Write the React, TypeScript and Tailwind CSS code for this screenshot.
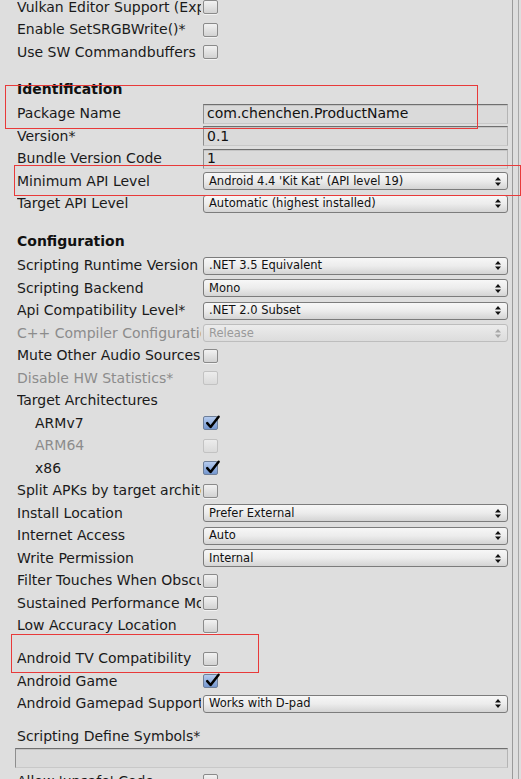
import React from "react";

type RowProps = {
  label: string;
  disabled?: boolean;
  indent?: boolean;
  children?: React.ReactNode;
};

const Row: React.FC<RowProps> = ({ label, disabled, indent, children }) => (
  <div className="flex h-[22.5px] items-center">
    <div
      className={`w-[184px] shrink-0 overflow-hidden whitespace-nowrap ${
        indent ? "pl-[18px]" : ""
      } ${disabled ? "text-[#8c8c8c]" : "text-[#1a1a1a]"}`}
    >
      {label}
    </div>
    <div className="ml-[2px] flex min-w-0 flex-1 items-center">{children}</div>
  </div>
);

const Checkbox: React.FC<{ checked?: boolean; disabled?: boolean }> = ({
  checked,
  disabled,
}) => {
  if (disabled) {
    return (
      <div className="h-[14px] w-[15px] rounded-[2px] border border-[#c2c2c2] bg-gradient-to-b from-[#ececec] to-[#dadada]" />
    );
  }
  if (checked) {
    return (
      <div className="relative h-[14px] w-[15px] rounded-[2px] border border-[#6e7f99] bg-gradient-to-b from-[#b5cbee] to-[#7597cf]">
        <svg
          className="absolute -top-[3px] left-[1px] overflow-visible"
          width="16"
          height="16"
          viewBox="0 0 16 16"
        >
          <path
            d="M2.2 9.2 L5.6 13 L13.6 2.8"
            fill="none"
            stroke="#000"
            strokeWidth="2.5"
            strokeLinecap="round"
            strokeLinejoin="round"
          />
        </svg>
      </div>
    );
  }
  return (
    <div className="h-[14px] w-[15px] rounded-[2px] border border-[#8a8a8a] bg-gradient-to-b from-[#f2f2f2] to-[#d2d2d2] shadow-[0_1px_0_rgba(255,255,255,0.6)]" />
  );
};

const Arrows: React.FC<{ disabled?: boolean }> = ({ disabled }) => (
  <svg width="6" height="9" viewBox="0 0 6 9">
    <path d="M3 0 L6 3.5 L0 3.5 Z M3 9 L6 5.5 L0 5.5 Z" fill={disabled ? "#a8a8a8" : "#111"} />
  </svg>
);

const Dropdown: React.FC<{ value: string; disabled?: boolean }> = ({
  value,
  disabled,
}) => (
  <div
    className={`flex h-[18px] w-full items-center justify-between rounded-[3px] border pl-[5px] pr-[6px] text-[11.5px] ${
      disabled
        ? "border-[#bdbdbd] bg-gradient-to-b from-[#ececec] to-[#dcdcdc] text-[#9a9a9a]"
        : "border-[#7c7c7c] bg-gradient-to-b from-[#f7f7f7] via-[#ececec] to-[#d4d4d4] text-[#111]"
    }`}
  >
    <span className="whitespace-nowrap">{value}</span>
    <Arrows disabled={disabled} />
  </div>
);

const Field: React.FC<{ value?: string }> = ({ value }) => (
  <div className="flex h-[20px] w-full items-center border border-t-[#6f6f6f] border-l-[#8e8e8e] border-r-[#b4b4b4] border-b-[#c8c8c8] bg-[#dadada] pl-[3px] text-[#111] shadow-[inset_0_1px_0_#c4c4c4]">
    <span className="whitespace-nowrap">{value}</span>
  </div>
);

const Header: React.FC<{ title: string }> = ({ title }) => (
  <div className="flex h-[27px] items-center font-bold text-[#111]">{title}</div>
);

export default function App() {
  return (
    <div className="relative h-[779px] w-[521px] overflow-hidden bg-[#dedede] font-['DejaVu_Sans',sans-serif] text-[14px]">
      <div className="flex h-full">
        <div className="-mt-[4px] w-[512px] pl-[17px] pr-[4px]">
          <Row label="Vulkan Editor Support (Experimental)">
            <Checkbox />
          </Row>
          <Row label="Enable SetSRGBWrite()*">
            <Checkbox />
          </Row>
          <Row label="Use SW Commandbuffers">
            <Checkbox />
          </Row>

          <div className="h-[12px]" />
          <Header title="Identification" />
          <Row label="Package Name">
            <Field value="com.chenchen.ProductName" />
          </Row>
          <Row label="Version*">
            <Field value="0.1" />
          </Row>
          <Row label="Bundle Version Code">
            <Field value="1" />
          </Row>
          <Row label="Minimum API Level">
            <Dropdown value="Android 4.4 'Kit Kat' (API level 19)" />
          </Row>
          <Row label="Target API Level">
            <Dropdown value="Automatic (highest installed)" />
          </Row>

          <div className="h-[12.5px]" />
          <Header title="Configuration" />
          <Row label="Scripting Runtime Version">
            <Dropdown value=".NET 3.5 Equivalent" />
          </Row>
          <Row label="Scripting Backend">
            <Dropdown value="Mono" />
          </Row>
          <Row label="Api Compatibility Level*">
            <Dropdown value=".NET 2.0 Subset" />
          </Row>
          <Row label="C++ Compiler Configuration" disabled>
            <Dropdown value="Release" disabled />
          </Row>
          <Row label="Mute Other Audio Sources">
            <Checkbox />
          </Row>
          <Row label="Disable HW Statistics*" disabled>
            <Checkbox disabled />
          </Row>
          <Row label="Target Architectures" />
          <Row label="ARMv7" indent>
            <Checkbox checked />
          </Row>
          <Row label="ARM64" indent disabled>
            <Checkbox disabled />
          </Row>
          <Row label="x86" indent>
            <Checkbox checked />
          </Row>
          <Row label="Split APKs by target architecture">
            <Checkbox />
          </Row>
          <Row label="Install Location">
            <Dropdown value="Prefer External" />
          </Row>
          <Row label="Internet Access">
            <Dropdown value="Auto" />
          </Row>
          <Row label="Write Permission">
            <Dropdown value="Internal" />
          </Row>
          <Row label="Filter Touches When Obscured">
            <Checkbox />
          </Row>
          <Row label="Sustained Performance Mode">
            <Checkbox />
          </Row>
          <Row label="Low Accuracy Location">
            <Checkbox />
          </Row>

          <div className="h-[10.5px]" />
          <Row label="Android TV Compatibility">
            <Checkbox />
          </Row>
          <Row label="Android Game">
            <Checkbox checked />
          </Row>
          <Row label="Android Gamepad Support Level">
            <Dropdown value="Works with D-pad" />
          </Row>

          <div className="h-[10.5px]" />
          <Row label="Scripting Define Symbols*" />
          <div className="-ml-[2px] h-[20px]">
            <Field />
          </div>
          <div className="h-[2px]" />
          <Row label="Allow 'unsafe' Code">
            <Checkbox />
          </Row>
        </div>
        <div className="w-px bg-[#9a9a9a]" />
        <div className="w-[5px]" />
        <div className="w-px bg-[#a8a8a8]" />
      </div>

      {/* annotation boxes */}
      <div className="absolute left-[5px] top-[85px] h-[44px] w-[473px] border border-[#e83a3a]" />
      <div className="absolute left-[14px] top-[165px] h-[31px] w-[507px] border border-[#e83a3a]" />
      <div className="absolute left-[11px] top-[634px] h-[39px] w-[248px] border border-[#e83a3a]" />
    </div>
  );
}
